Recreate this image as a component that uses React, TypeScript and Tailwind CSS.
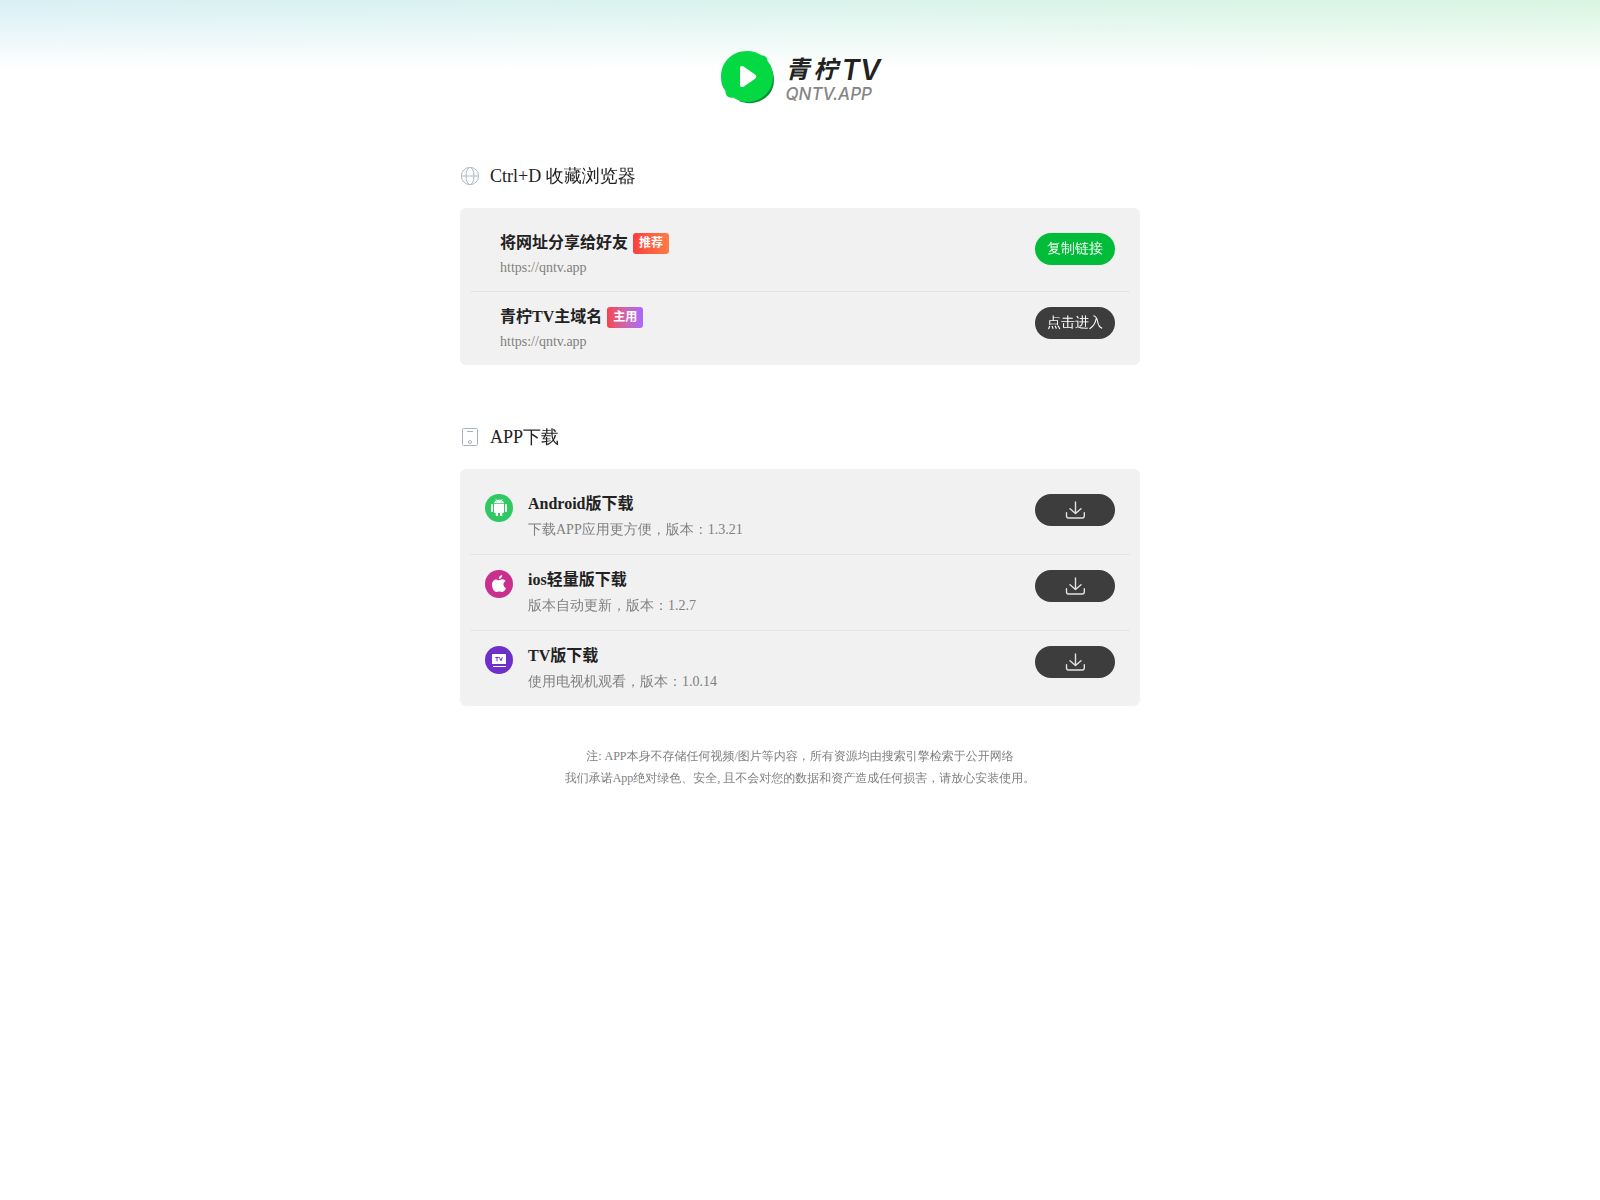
import React from 'react';

interface LinkItem {
  title: string;
  url: string;
  tag: string;
  tagClass: string;
  action: string;
  primary?: boolean;
}

interface DownloadItem {
  title: string;
  desc: string;
  icon: React.ReactNode;
}

function Logo() {
  return (
    <a href="#" aria-label="青柠TV" className="flex items-center gap-[10px]">
      <svg className="h-14 w-14" viewBox="0 0 56 56" fill="none">
        <path d="M50 15C57 28 55 43 42 50C35 54 26 54 19 51L46 14Z" fill="#0a9136" />
        <path
          d="M27 1C33 1 38 3 42 5.5C45 5.5 47.5 7.5 47.5 11C51 15 53 21 53 26.5C53 41 42 52 27 52C22 52 17 50 13 47.5C9 48.5 5 46 5.5 41C2 37 1 32 1 27C1 12 12 1 27 1Z"
          fill="#04d843"
        />
        <path d="M20 18.5C20 16 22 15.5 24 16.8L35 24.5C36.8 25.8 36.8 27.6 35 28.8L24 36.4C22 37.8 20 37 20 34.8Z" fill="#fff" />
      </svg>
      <div className="pt-1 font-['Inter','Noto_Sans_CJK_SC',sans-serif] italic">
        <div className="flex gap-1 text-2xl leading-7 font-bold text-[#222]">
          <span>青</span>
          <span>柠</span>
          <span className="text-[28px] font-semibold">TV</span>
        </div>
        <div className="text-[17px] leading-5 font-medium text-[#858585]">QNTV.APP</div>
      </div>
    </a>
  );
}

function GlobeIcon() {
  return (
    <svg className="h-5 w-5" viewBox="0 0 20 20" fill="none" stroke="#b0b8c1">
      <circle cx="10" cy="10" r="8.6" />
      <ellipse cx="10" cy="10" rx="4" ry="8.6" />
      <path d="M1.4 10H18.6" />
    </svg>
  );
}

function TabletIcon() {
  return (
    <svg className="h-5 w-5" viewBox="0 0 20 20" fill="none" stroke="#a9b2bc">
      <rect x="2.5" y="1.5" width="15" height="17" rx="1" />
      <path d="M7 4.5H13" />
      <circle cx="10" cy="15" r="1.5" />
    </svg>
  );
}

function AndroidIcon() {
  return (
    <svg className="h-7 w-7" viewBox="0 0 28 28">
      <circle cx="14" cy="14" r="14" fill="#2fc862" />
      <g fill="#fff">
        <path d="M9 9.3C9.2 7.8 10.2 6.9 11.2 6.4L10.3 5.2L10.7 4.9L11.8 6.1C13.2 5.6 14.8 5.6 16.2 6.1L17.3 4.9L17.7 5.2L16.8 6.4C17.8 6.9 18.8 7.8 19 9.3Z" />
        <path d="M9 10H19V18C19 18.6 18.6 19 18 19H17.3V21.3C17.3 22.5 15 22.5 15 21.3V19H13V21.3C13 22.5 10.7 22.5 10.7 21.3V19H10C9.4 19 9 18.6 9 18Z" />
        <rect x="6" y="10" width="2" height="8" rx="1" />
        <rect x="20" y="10" width="2" height="8" rx="1" />
      </g>
      <circle cx="11.8" cy="7.8" r=".5" fill="#2fc862" />
      <circle cx="16.2" cy="7.8" r=".5" fill="#2fc862" />
    </svg>
  );
}

function AppleIcon() {
  return (
    <svg className="h-7 w-7" viewBox="0 0 28 28">
      <circle cx="14" cy="14" r="14" fill="#c92f8c" />
      <g fill="#fff">
        <path d="M17.2 5C17.4 7.2 15.6 9.2 13.8 9.1C13.6 7.1 15.3 5.2 17.2 5Z" />
        <path d="M14.1 10.2C15 10.2 15.9 9.3 17.5 9.3C18.8 9.3 19.9 10 20.6 11C17.4 12.9 18 16.9 21 18.1C20.3 20 18.9 22 17.3 22C16.2 22 15.7 21.4 14.3 21.4C12.9 21.4 12.3 22 11.3 22C9.2 22 7 18.2 7 14.8C7 11.4 9.1 9.4 11.2 9.4C12.5 9.4 13.4 10.2 14.1 10.2Z" />
      </g>
    </svg>
  );
}

function TvIcon() {
  return (
    <svg className="h-7 w-7" viewBox="0 0 28 28">
      <circle cx="14" cy="14" r="14" fill="#6f2fc9" />
      <rect x="7" y="8" width="14" height="10" rx=".5" fill="#fff" />
      <rect x="8" y="20" width="13" height="1" fill="#fff" />
      <path d="M10.3 11.5H13.7M12 11.5V15.2M14.4 11.2L15.9 14.8L17.4 11.2" fill="none" stroke="#6f2fc9" />
    </svg>
  );
}

function DownloadIcon() {
  return (
    <svg className="h-5 w-5" viewBox="0 0 20 20" fill="none" stroke="#e2e2e2" strokeWidth="1.4" strokeLinecap="round" strokeLinejoin="round">
      <path d="M10.5 2V13.2M5 8.8L10.5 13.5L16 8.8M1.5 12.8V15.8C1.5 17.2 2.3 18 3.5 18H17.3C18.5 18 19.3 17.2 19.3 15.8V12.8" />
    </svg>
  );
}

const links: LinkItem[] = [
  {
    title: '将网址分享给好友',
    url: 'https://qntv.app',
    tag: '推荐',
    tagClass: 'bg-linear-to-r from-[#fa3e3e] to-[#ff7a45]',
    action: '复制链接',
    primary: true,
  },
  {
    title: '青柠TV主域名',
    url: 'https://qntv.app',
    tag: '主用',
    tagClass: 'bg-linear-to-r from-[#f5424b] to-[#a868ff]',
    action: '点击进入',
  },
];

const downloads: DownloadItem[] = [
  { title: 'Android版下载', desc: '下载APP应用更方便，版本：1.3.21', icon: <AndroidIcon /> },
  { title: 'ios轻量版下载', desc: '版本自动更新，版本：1.2.7', icon: <AppleIcon /> },
  { title: 'TV版下载', desc: '使用电视机观看，版本：1.0.14', icon: <TvIcon /> },
];

function Section({ icon, title, children }: { icon: React.ReactNode; title: string; children: React.ReactNode }) {
  return (
    <section className="mb-[60px] last:mb-0">
      <h2 className="mb-5 flex items-center gap-[10px] text-lg leading-6">
        {icon}
        {title}
      </h2>
      <ul className="divide-y divide-[#e4e4e4] rounded-md bg-[#f1f1f1] px-[10px] pt-[10px]">{children}</ul>
    </section>
  );
}

export default function App() {
  return (
    <div className="font-['Liberation_Serif','WenQuanYi_Zen_Hei','Noto_Sans_CJK_SC',serif] text-[#222]">
      <div className="bg-linear-to-r from-[#d8eff5] via-[#d9f3ec] to-[#d8f5e0]">
        <header className="flex h-[164px] justify-center bg-linear-to-b from-transparent to-white to-[70px] pt-[50px]">
          <div>
            <Logo />
          </div>
        </header>
      </div>

      <main className="mx-auto max-w-[680px]">
        <Section icon={<GlobeIcon />} title="Ctrl+D 收藏浏览器">
          {links.map((item) => (
            <li key={item.title} className="flex items-start justify-between px-[15px] pt-[15px] pb-[13px]">
              <div className="ml-[15px]">
                <h3 className="flex gap-[5px] font-['Liberation_Serif','Noto_Sans_CJK_SC',serif] text-base leading-5 font-bold">
                  {item.title}
                  <span className={`rounded-[3px] px-[6px] text-xs leading-[21px] text-white ${item.tagClass}`}>{item.tag}</span>
                </h3>
                <p className="mt-1 text-sm leading-5 text-[#808080]">{item.url}</p>
              </div>
              <button
                className={`h-8 w-20 rounded-full text-sm text-white ${item.primary ? 'bg-[#00bc38]' : 'bg-[#3d3d3d]'}`}
              >
                {item.action}
              </button>
            </li>
          ))}
        </Section>

        <Section icon={<TabletIcon />} title="APP下载">
          {downloads.map((item) => (
            <li key={item.title} className="flex items-start gap-[15px] px-[15px] pt-[15px] pb-[14px]">
              {item.icon}
              <div className="flex-1">
                <h3 className="font-['Liberation_Serif','Noto_Sans_CJK_SC',serif] text-base leading-5 font-bold">{item.title}</h3>
                <p className="mt-[6px] text-sm leading-5 text-[#808080]">{item.desc}</p>
              </div>
              <button
                aria-label={item.title}
                className="flex h-8 w-20 items-center justify-center rounded-full bg-[#3d3d3d]"
              >
                <DownloadIcon />
              </button>
            </li>
          ))}
        </Section>
      </main>

      <footer className="pt-[39px] text-center text-xs leading-[22px] text-[#808080]">
        <p>注: APP本身不存储任何视频/图片等内容，所有资源均由搜索引擎检索于公开网络</p>
        <p>我们承诺App绝对绿色、安全, 且不会对您的数据和资产造成任何损害，请放心安装使用。</p>
      </footer>
    </div>
  );
}
